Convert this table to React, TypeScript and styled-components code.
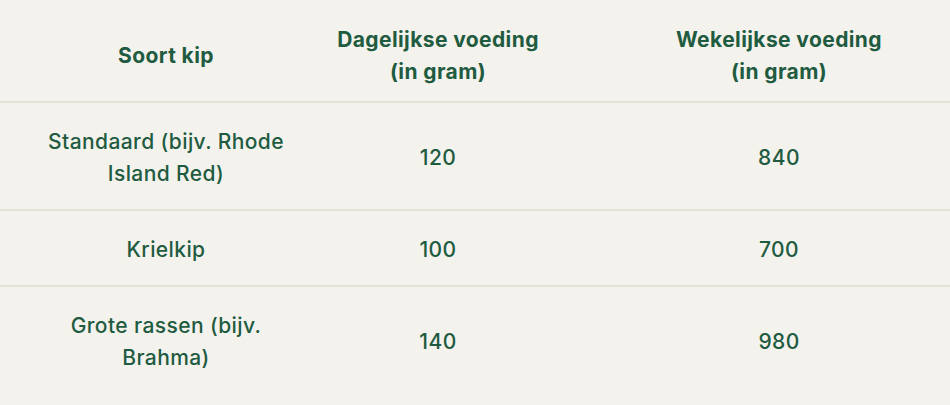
import { createGlobalStyle, styled } from 'styled-components';

const GREEN = '#1f5b40';
const CREAM = '#f3f2ed';
const RULE = '#e3e3d4';

const GlobalStyle = createGlobalStyle`
  html, body {
    margin: 0;
    padding: 0;
    background-color: ${CREAM};
  }

  body {
    font-family: Inter, 'Open Sans', sans-serif;
    color: ${GREEN};
    -webkit-font-smoothing: antialiased;
  }
`;

const Table = styled.div`
  width: 950px;
  height: 405px;
  overflow: hidden;
  display: flex;
  flex-direction: column;
  background-color: ${CREAM};
`;

const Row = styled.div<{ $head?: boolean; $last?: boolean }>`
  display: grid;
  grid-template-columns: 332px 276px 1fr;
  align-items: center;
  padding: ${(p) => (p.$head ? '24px 0 13px' : '23px 0 19px')};
  border-bottom: ${(p) => (p.$last ? 'none' : `2px solid ${RULE}`)};
`;

const Cell = styled.div<{ $head?: boolean }>`
  font-size: 21px;
  line-height: 32px;
  font-weight: ${(p) => (p.$head ? 700 : 500)};
  letter-spacing: 0.4px;
  text-align: center;
  display: flex;
  justify-content: center;

  &:nth-child(1) {
    padding: 0 38px;
  }

  &:nth-child(2) {
    padding: 0 64px 0 0;
  }

  &:nth-child(3) {
    padding: 0;
  }
`;

const Label = styled.span<{ $narrow?: boolean }>`
  display: block;
  max-width: ${(p) => (p.$narrow ? '210px' : 'none')};
`;

const ROWS = [
  { kind: 'Standaard (bijv. Rhode Island Red)', day: 120, week: 840 },
  { kind: 'Krielkip', day: 100, week: 700 },
  { kind: 'Grote rassen (bijv. Brahma)', day: 140, week: 980 },
];

function App() {
  return (
    <>
      <GlobalStyle />
      <Table>
        <Row $head>
          <Cell $head>
            <Label>Soort kip</Label>
          </Cell>
          <Cell $head>
            <Label $narrow>Dagelijkse voeding (in gram)</Label>
          </Cell>
          <Cell $head>
            <Label $narrow>Wekelijkse voeding (in gram)</Label>
          </Cell>
        </Row>
        {ROWS.map((row, i) => (
          <Row key={row.kind} $last={i === ROWS.length - 1}>
            <Cell>
              <Label>{row.kind}</Label>
            </Cell>
            <Cell>
              <Label>{row.day}</Label>
            </Cell>
            <Cell>
              <Label>{row.week}</Label>
            </Cell>
          </Row>
        ))}
      </Table>
    </>
  );
}

export default App;
